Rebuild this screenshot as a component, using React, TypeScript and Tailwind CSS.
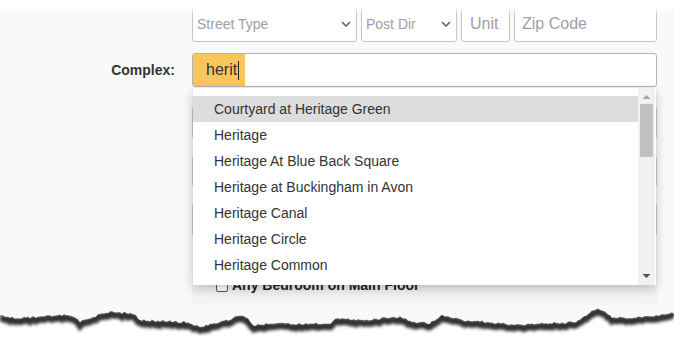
const items = [
  "Courtyard at Heritage Green",
  "Heritage",
  "Heritage At Blue Back Square",
  "Heritage at Buckingham in Avon",
  "Heritage Canal",
  "Heritage Circle",
  "Heritage Common",
]

// rough outline of the torn bottom edge, page coordinates
const edge: [number, number][] = [
  [0, 316], [10, 317], [20, 318], [45, 316], [67, 315], [75, 318], [80, 322], [95, 316],
  [110, 312], [125, 313], [133, 313], [140, 320], [160, 321], [187, 322], [200, 327],
  [213, 323], [228, 320], [240, 315], [248, 318], [253, 325], [280, 323], [300, 324],
  [330, 323], [337, 318], [360, 320], [400, 317], [413, 322], [430, 323], [443, 315],
  [463, 320], [490, 322], [523, 325], [550, 323], [577, 322], [590, 312], [597, 308],
  [605, 312], [613, 318], [640, 317], [674, 313],
]

function noise(i: number) {
  const s = Math.sin(i * 12.9898) * 43758.5453
  return s - Math.floor(s)
}

function edgeY(x: number) {
  for (let i = 0; i < edge.length - 1; i++) {
    const [x0, y0] = edge[i]
    const [x1, y1] = edge[i + 1]
    if (x >= x0 && x <= x1) return y0 + ((y1 - y0) * (x - x0)) / (x1 - x0)
  }
  return edge[edge.length - 1][1]
}

function TornEdge() {
  const top = 290
  const pts: string[] = []
  for (let x = 0; x <= 674; x += 2) {
    const y = edgeY(x) - top + (noise(x) - 0.5) * 2.4
    pts.push(`${x},${y.toFixed(1)}`)
  }
  const line = pts.join(" ")
  const area = `M0,48 L${line} L674,48 Z`
  return (
    <svg className="absolute left-0 top-[290px]" width="674" height="48" viewBox="0 0 674 48">
      <defs>
        <clipPath id="below">
          <path d={area} />
        </clipPath>
        <filter id="soft" x="-5%" y="-50%" width="110%" height="200%">
          <feGaussianBlur stdDeviation="1.6" />
        </filter>
      </defs>
      <path d={area} fill="#ffffff" />
      <g clipPath="url(#below)">
        <polyline points={line} transform="translate(0,3)" fill="none" stroke="#333333" strokeWidth="7" filter="url(#soft)" />
      </g>
    </svg>
  )
}

function Chevron() {
  return (
    <svg width="10" height="7" viewBox="0 0 10 7" className="shrink-0">
      <polyline points="1,1 5,5 9,1" fill="none" stroke="#666" strokeWidth="1.6" />
    </svg>
  )
}

export default function App() {
  return (
    <div className="relative h-[338px] w-[674px] overflow-hidden bg-[#f9f9f9] font-['Liberation_Sans',Arial,sans-serif] text-[#333]">
      <div className="flex flex-col">
        {/* address row */}
        <div className="mt-[6px] flex">
          <div className="w-[192px]" />
          <div className="flex h-[36px] w-[465px] gap-[4px]">
            <div className="flex w-[165px] items-center justify-between rounded-[3px] border border-[#c4c4c4] bg-white pl-[4px] pr-[5px] text-[14px] text-[#a0a0a0]">
              <span>Street Type</span>
              <Chevron />
            </div>
            <div className="flex w-[96px] items-center justify-between rounded-[3px] border border-[#c4c4c4] bg-white pl-[4px] pr-[5px] text-[14px] text-[#a0a0a0]">
              <span>Post Dir</span>
              <Chevron />
            </div>
            <div className="flex w-[49px] items-center rounded-[3px] border border-[#c4c4c4] bg-white pl-[8px] text-[16px] text-[#a0a0a0]">
              Unit
            </div>
            <div className="flex w-[143px] items-center rounded-[3px] border border-[#c4c4c4] bg-white pl-[7px] text-[16px] text-[#a0a0a0]">
              Zip Code
            </div>
          </div>
        </div>

        {/* complex row */}
        <div className="mt-[11px] flex items-center">
          <div className="w-[192px] pr-[17px] text-right text-[14px] font-bold">Complex:</div>
          <div className="relative w-[465px]">
            <div className="flex h-[34px] items-stretch rounded-[3px] border border-[#b4b4b4] bg-white">
              <span className="flex items-center bg-[#f8c65c] pl-[13px] pr-[6px] text-[16px] text-[#333]">
                herit
                <span className="ml-px h-[19px] w-px bg-[#222]" />
              </span>
            </div>

            {/* autocomplete list */}
            <div className="absolute left-px top-[35px] z-10 h-[197px] w-[463px] bg-white shadow-[0_4px_10px_rgba(0,0,0,0.22)]">
              <ul className="pr-[18px] pt-[8px]">
                {items.map((item, i) => (
                  <li
                    key={item}
                    className={`flex h-[26px] items-center pl-[21px] text-[14px] text-[#333] ${i === 0 ? "bg-[#dddddd]" : ""}`}
                  >
                    {item}
                  </li>
                ))}
              </ul>
              <div className="absolute bottom-0 right-px top-0 flex w-[17px] flex-col items-center bg-[#f1f1f1]">
                <svg width="9" height="16" viewBox="0 0 9 16" className="shrink-0">
                  <polygon points="0.5,11 4.5,7 8.5,11" fill="#a3a3a3" />
                </svg>
                <div className="h-[53px] w-[13px] bg-[#c1c1c1]" />
                <div className="flex-1" />
                <svg width="9" height="16" viewBox="0 0 9 16" className="shrink-0">
                  <polygon points="0.5,5 4.5,9 8.5,5" fill="#505050" />
                </svg>
              </div>
            </div>
          </div>
        </div>

        {/* fields behind the list */}
        <div className="flex">
          <div className="w-[192px]" />
          <div className="flex h-[218px] w-[465px] flex-col bg-[#f3f3f3]">
            <div className="mt-[18px] h-[35px] rounded-[4px] border border-[#c4c4c4] bg-white" />
            <div className="mt-[15px] h-[33px] rounded-[4px] border border-[#c4c4c4] bg-white" />
            <div className="mt-[14px] h-[35px] rounded-[4px] border border-[#c4c4c4] bg-white" />
            <div className="mt-[38px] flex items-center gap-[4px] pl-[24px] text-[14px] font-bold text-[#222]">
              <span className="h-[12px] w-[12px] rounded-[2px] border border-[#555] bg-white" />
              Any Bedroom on Main Floor
            </div>
          </div>
        </div>
      </div>

      {/* soft white top edge */}
      <div className="pointer-events-none absolute inset-x-0 top-0 h-[15px] bg-gradient-to-b from-white from-45% to-transparent" />

      <TornEdge />
    </div>
  )
}
